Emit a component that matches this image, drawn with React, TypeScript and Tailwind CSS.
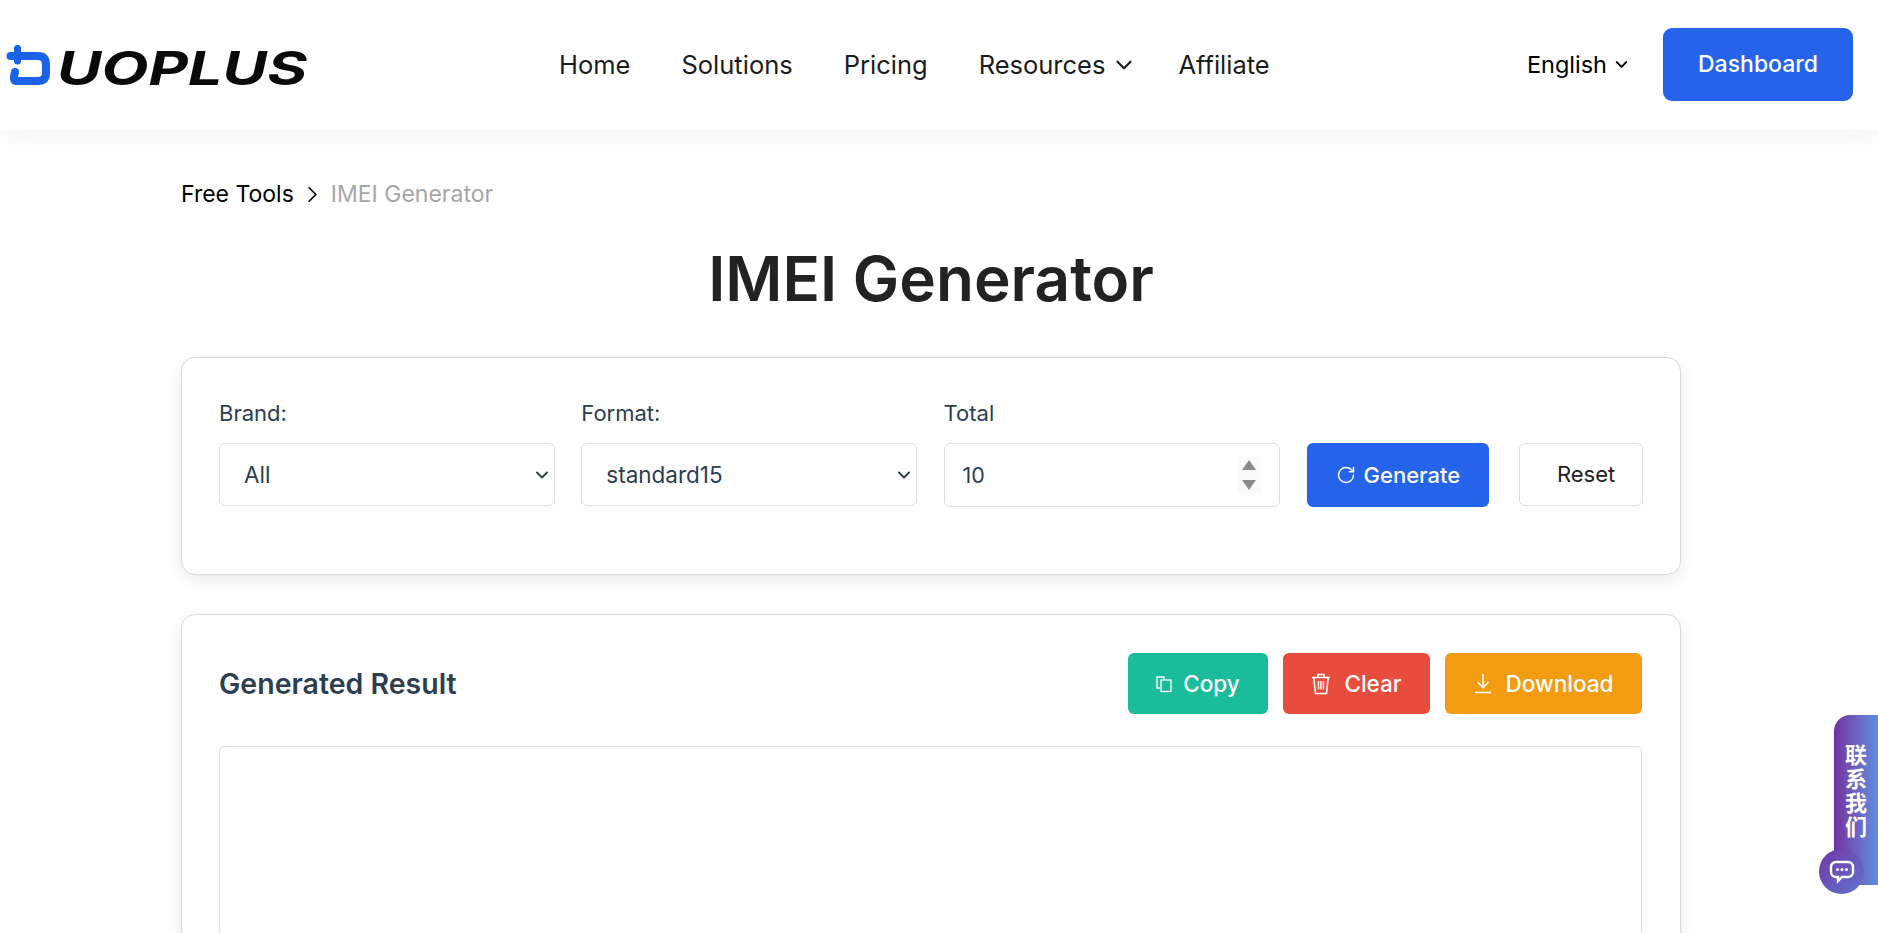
import { ChevronDown, ChevronRight, RotateCw } from "lucide-react";

const navItems = ["Home", "Solutions", "Pricing", "Resources", "Affiliate"];

function Logo() {
  return (
    <svg width="301" height="40" viewBox="0 0 301 40" className="mt-[4px] block overflow-visible">
      <g fill="none" stroke="#1a62e8" strokeLinejoin="round">
        <path d="M9.500 1.500V14" strokeWidth="7" strokeLinecap="round" />
        <path d="M2.500 9H30Q38 9 38 18V26Q38 34 30 34H8Q5.500 34 6 30L7 25" strokeWidth="8" strokeLinecap="round" />
      </g>
      <text x="49" y="38" textLength="250" lengthAdjust="spacingAndGlyphs" fontFamily="Inter, sans-serif" fontWeight="700" fontStyle="italic" fontSize="46" fill="#0a0a0a">UOPLUS</text>
    </svg>
  );
}

function Field({ label, children, width }: { label: string; children: React.ReactNode; width: string }) {
  return (
    <div className={`flex flex-col ${width}`}>
      <label className="mb-[18px] h-[24px] text-[22px] leading-[24px] text-[#2c3e50]">{label}</label>
      {children}
    </div>
  );
}

function SelectBox({ value }: { value: string }) {
  return (
    <div className="relative">
      <select defaultValue={value} className="h-[63px] w-full appearance-none rounded-[6px] border border-[#dddddd] bg-white pl-[24px] pr-[30px] text-[22.5px] text-[#2c3e50]">
        <option>{value}</option>
      </select>
      <ChevronDown size={20} strokeWidth={2.25} className="pointer-events-none absolute right-[3px] top-[22px] text-[#2c3e50]" />
    </div>
  );
}

export default function App() {
  return (
    <div className="relative h-screen w-full overflow-hidden bg-white font-['Inter',sans-serif] text-[#222222]">
      {/* Header */}
      <header className="relative z-10 flex h-[130px] items-center justify-between bg-white pl-[8px] pr-[25px] shadow-[0_8px_30px_rgba(0,0,0,0.045)]">
        <div className="flex items-center">
          <Logo />
          <nav className="ml-[250px] flex items-center gap-[51px] text-[25.5px] text-[#1c1c1c]">
            {navItems.map((n) => (
              <a key={n} className="flex items-center gap-[6px]">
                {n}
                {n === "Resources" && <ChevronDown size={26} strokeWidth={2} className="mr-[-10px]" />}
              </a>
            ))}
          </nav>
        </div>
        <div className="mb-[1px] flex items-center">
          <span className="flex items-center gap-[5px] text-[23.5px] text-black">
            English <ChevronDown size={19} strokeWidth={2.5} />
          </span>
          <button className="ml-[32px] h-[73px] w-[190px] rounded-[9px] bg-[#2563eb] text-[23px] font-medium text-white">Dashboard</button>
        </div>
      </header>

      <main className="ml-[181px] w-[1500px] pt-[50px]">
        {/* Breadcrumb */}
        <div className="flex h-[28px] items-center text-[23px] leading-[28px]">
          <span className="text-black">Free Tools</span>
          <ChevronRight size={27} strokeWidth={1.5} className="mx-[5px] text-black" />
          <span className="text-[#a6a6a6]">IMEI Generator</span>
        </div>

        <h1 className="mt-[35px] text-center text-[62px] font-semibold leading-[72px] text-[#222222]">IMEI Generator</h1>

        {/* Options card */}
        <section className="mt-[42px] h-[218px] rounded-[14px] border border-[#d9d9d9] bg-white px-[37px] pt-[43px] shadow-[0_5px_15px_rgba(0,0,0,0.08)]">
          <div className="flex items-start">
            <Field label="Brand:" width="w-[337px]">
              <SelectBox value="All" />
            </Field>
            <Field label="Format:" width="ml-[26px] w-[336px]">
              <SelectBox value="standard15" />
            </Field>
            <Field label="Total" width="ml-[27px] w-[336px]">
              <div className="flex h-[64px] items-center rounded-[6px] border border-[#dddddd] bg-white px-[18px] text-[21.5px] text-[#2c3e50]">
                <input readOnly value="10" className="min-w-0 flex-1 bg-transparent outline-none" />
                <span className="flex h-[36px] w-[24px] flex-col items-center justify-between bg-[#fafafa] py-[3px]">
                  <span className="h-0 w-0 border-x-[7px] border-b-[10px] border-x-transparent border-b-[#8a8a8a]" />
                  <span className="h-0 w-0 border-x-[7px] border-t-[10px] border-x-transparent border-t-[#8a8a8a]" />
                </span>
              </div>
            </Field>
            <button className="ml-[27px] mt-[42px] flex h-[64px] w-[183px] items-center justify-center gap-[8px] rounded-[6px] bg-[#2563eb] text-[22px] font-medium text-white">
              <RotateCw size={20} strokeWidth={1.75} /> Generate
            </button>
            <button className="ml-[30px] mt-[42px] h-[63px] w-[124px] rounded-[6px] border border-[#dddddd] bg-white pl-[10px] text-[22px] text-[#222222]">Reset</button>
          </div>
        </section>

        {/* Result card */}
        <section className="mt-[39px] rounded-[14px] border border-[#d9d9d9] bg-white pb-[40px] pl-[37px] pr-[38px] pt-[38px] shadow-[0_5px_15px_rgba(0,0,0,0.08)]">
          <div className="flex items-center justify-between">
            <h2 className="mt-[1px] text-[28.500px] font-semibold text-[#2c3e50]">Generated Result</h2>
            <div className="flex gap-[15px]">
              <button className="flex h-[61px] w-[140px] items-center justify-center gap-[11px] rounded-[6px] bg-[#1abc9c] text-[22.5px] font-medium text-white">
                <svg width="16" height="18" viewBox="0 0 16 18" fill="none" stroke="currentColor" strokeWidth="1.3">
                  <path d="M4 13H1V2h7v3" />
                  <rect x="5" y="5" width="10" height="11.500" />
                </svg>
                Copy
              </button>
              <button className="flex h-[61px] w-[147px] items-center justify-center gap-[13px] rounded-[6px] bg-[#e74c3c] text-[22.5px] font-medium text-white">
                <svg width="20" height="22" viewBox="0 0 20 22" fill="none" stroke="currentColor" strokeWidth="1.6">
                  <path d="M1 4.500h18M7 4.500V1.500h6v3M2.800 4.500 4.500 20.500h11l1.700-16" />
                  <path d="M7.500 8v8.500M10 8v8.500M12.500 8v8.500" strokeWidth="1.4" />
                </svg>
                Clear
              </button>
              <button className="flex h-[61px] w-[197px] items-center justify-center gap-[14px] rounded-[6px] bg-[#f39c12] text-[22.5px] font-medium text-white">
                <svg width="18" height="21" viewBox="0 0 18 21" fill="none" stroke="currentColor" strokeWidth="1.6">
                  <path d="M9 1v13M3.500 9 9 14.500 14.500 9M1 19.500h16" />
                </svg>
                Download
              </button>
            </div>
          </div>
          <div className="mt-[32px] h-[400px] rounded-[6px] border border-[#dddddd] bg-white" />
        </section>
      </main>

      {/* Contact widget */}
      <aside className="absolute left-[1834px] top-[715px] z-20 flex h-[170px] w-[44px] flex-col items-center rounded-l-[16px] bg-gradient-to-r from-[#7030a0] to-[#5b8fe0] pt-[29px] font-['Noto_Sans_CJK_SC',sans-serif] text-[22px] font-bold text-white">
        <span className="leading-none tracking-[2px] [writing-mode:vertical-rl]">联系我们</span>
      </aside>
      <div className="absolute left-[1819px] top-[849px] z-30 flex h-[45px] w-[45px] items-center justify-center rounded-full bg-gradient-to-br from-[#6f35a5] to-[#5a74d0]">
        <svg width="26" height="24" viewBox="0 0 26 24" fill="none">
          <path d="M7 2h12a5 5 0 0 1 5 5v5a5 5 0 0 1-5 5h-6l-4 4v-4H7a5 5 0 0 1-5-5V7a5 5 0 0 1 5-5z" stroke="white" strokeWidth="2.4" />
          <circle cx="8.500" cy="9.500" r="1.500" fill="white" />
          <circle cx="13" cy="9.500" r="1.500" fill="white" />
          <circle cx="17.500" cy="9.500" r="1.500" fill="white" />
        </svg>
      </div>
    </div>
  );
}
